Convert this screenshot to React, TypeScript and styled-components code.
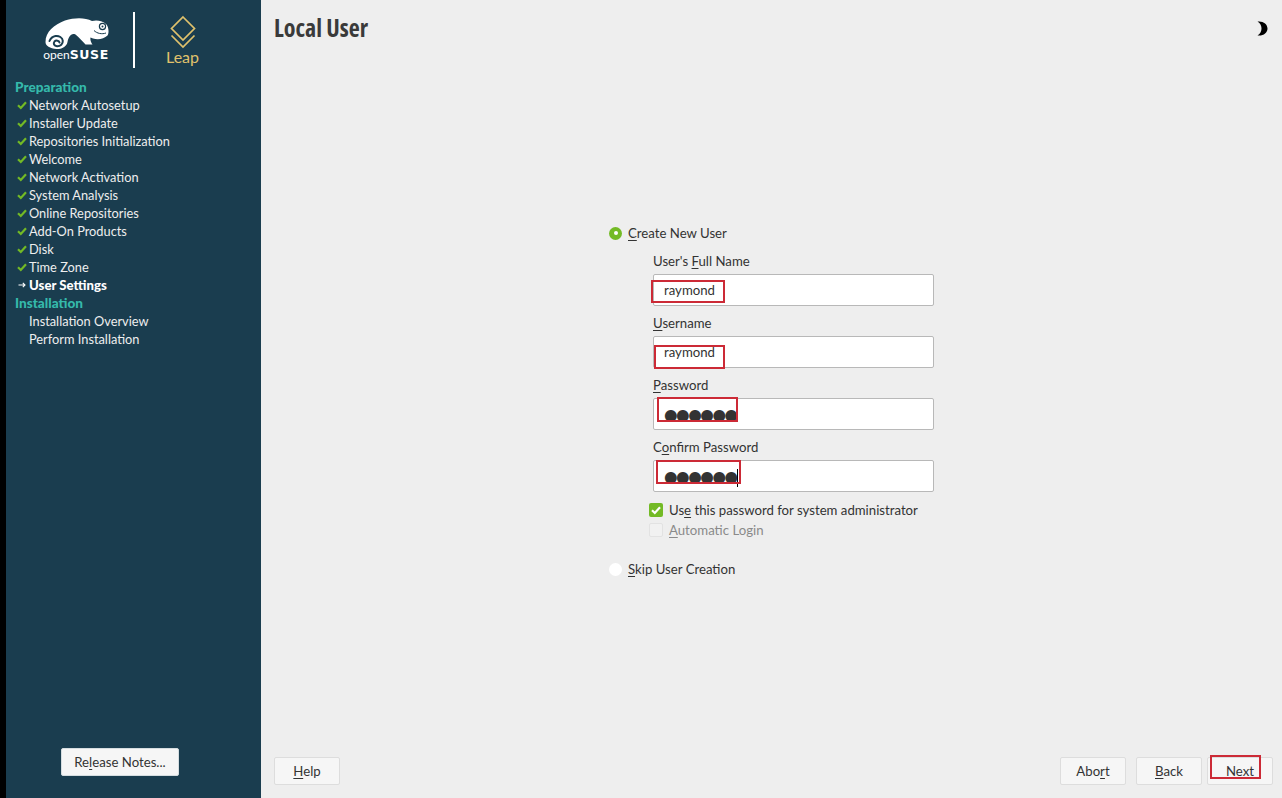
import React from "react";
import styled, { createGlobalStyle } from "styled-components";

const GlobalStyle = createGlobalStyle`
  html, body {
    margin: 0;
    height: 100%;
    overflow: hidden;
  }
  #root {
    height: 100%;
  }
`;

const Page = styled.div`
  display: flex;
  width: 1282px;
  height: 798px;
  background: #eeeeee;
  color: #333333;
  font-family: Lato, "Noto Sans", sans-serif;
  font-size: 13.2px;
`;

const Sidebar = styled.aside`
  display: flex;
  flex-direction: column;
  width: 255px;
  margin-left: 6px;
  background: #1a3d4f;
  box-shadow: -6px 0 0 #000;
  color: #eeeeee;
  font-size: 12.8px;
`;

const Logos = styled.div`
  display: flex;
  align-items: flex-start;
  height: 78px;
  box-sizing: border-box;
  padding: 12px 0 0 36px;
`;

const SuseLogo = styled.div`
  display: flex;
  flex-direction: column;
  align-items: center;
  width: 72px;
  padding-top: 5px;
`;

const SuseWord = styled.div`
  display: flex;
  align-items: baseline;
  padding-right: 4px;
  color: #ffffff;
  line-height: 12px;
`;

const SuseOpen = styled.span`
  font-size: 12px;
`;

const SuseBold = styled.span`
  font-family: "DejaVu Sans", sans-serif;
  font-size: 12.5px;
  font-weight: 700;
  letter-spacing: 0.6px;
`;

const Divider = styled.div`
  width: 1.5px;
  height: 56px;
  margin: 0 0 0 19px;
  background: #ffffff;
`;

const LeapLogo = styled.div`
  display: flex;
  flex-direction: column;
  align-items: center;
  width: 40px;
  margin-left: 28px;
  padding-top: 3px;
  color: #e0c26c;
  font-size: 16px;
`;

const LeapWord = styled.span`
  margin-top: -2px;
  line-height: 20px;
`;

const Steps = styled.nav`
  display: flex;
  flex-direction: column;
  flex: 1;
  padding-left: 9px;
`;

const StepHeading = styled.div`
  height: 18px;
  line-height: 18px;
  color: #35b9ab;
  font-size: 13.6px;
  font-weight: 900;
`;

const Step = styled.div<{ $current?: boolean }>`
  display: flex;
  align-items: center;
  height: 18px;
  line-height: 18px;
  font-size: ${(p) => (p.$current ? "13.2px" : "inherit")};
  font-weight: ${(p) => (p.$current ? 900 : 400)};
  color: ${(p) => (p.$current ? "#ffffff" : "#eeeeee")};
`;

const StepMark = styled.span`
  display: flex;
  align-items: center;
  justify-content: center;
  width: 14px;
`;

const SidebarFooter = styled.div`
  display: flex;
  padding: 0 0 22px 55px;
`;

const Button = styled.button`
  box-sizing: border-box;
  height: 28px;
  width: 66px;
  padding: 0;
  position: relative;
  background: #f6f6f6;
  border: 1px solid #dddddd;
  border-radius: 2px;
  color: #333333;
  font: inherit;
  font-size: 13.2px;
`;

const ReleaseButton = styled(Button)`
  width: 118px;
  border-color: #d5dde0;
`;

const Main = styled.main`
  display: flex;
  flex-direction: column;
  flex: 1;
  min-width: 0;
`;

const Header = styled.header`
  display: flex;
  align-items: flex-start;
  justify-content: space-between;
  height: 57px;
  box-sizing: border-box;
  padding: 11px 14px 0 13px;
`;

const Title = styled.h1`
  margin: 0;
  color: #3a3a3a;
  font-family: "Open Sans", sans-serif;
  font-size: 24px;
  font-stretch: condensed;
  font-weight: 700;
  line-height: 34px;
`;

const ThemeToggle = styled.span`
  display: flex;
  margin-top: 10px;
`;

const Content = styled.div`
  display: flex;
  flex: 1;
  align-items: center;
  justify-content: center;
  min-height: 0;
`;

const Form = styled.form`
  display: flex;
  flex-direction: column;
  width: 325px;
`;

const RadioRow = styled.label`
  display: flex;
  align-items: center;
  height: 18px;
`;

const Radio = styled.span<{ $on?: boolean }>`
  display: flex;
  align-items: center;
  justify-content: center;
  box-sizing: border-box;
  width: 13px;
  height: 13px;
  margin-right: 6px;
  border-radius: 50%;
  background: ${(p) => (p.$on ? "#73ba25" : "#ffffff")};
  &::after {
    content: "";
    display: ${(p) => (p.$on ? "block" : "none")};
    width: 4px;
    height: 4px;
    border-radius: 50%;
    background: #ffffff;
  }
`;

const UserFields = styled.div`
  display: flex;
  flex-direction: column;
  gap: 8px;
  margin: 10px 0 0 44px;
`;

const Field = styled.div`
  display: flex;
  flex-direction: column;
  gap: 4px;
  position: relative;
`;

const FieldLabel = styled.label`
  height: 18px;
  line-height: 18px;
`;

const TextBox = styled.div`
  display: flex;
  align-items: center;
  box-sizing: border-box;
  height: 32px;
  padding-left: 10px;
  background: #ffffff;
  border: 1px solid #b8b8b8;
  border-radius: 2px;
`;

const Dots = styled.span`
  margin-top: 2px;
  font-family: "DejaVu Sans", sans-serif;
  font-size: 15.6px;
  letter-spacing: -1.5px;
  line-height: 20px;
`;

const Caret = styled.span`
  width: 1px;
  height: 18px;
  margin: 3px 0 0 0;
  background: #000000;
`;

const Highlight = styled.span<{ $x: number; $y: number; $w: number; $h: number }>`
  position: absolute;
  left: ${(p) => p.$x}px;
  top: ${(p) => p.$y}px;
  width: ${(p) => p.$w}px;
  height: ${(p) => p.$h}px;
  box-sizing: border-box;
  border: 2px solid #cc2a36;
  pointer-events: none;
`;

const Options = styled.div`
  display: flex;
  flex-direction: column;
  gap: 2px;
  margin: 9px 0 21px 40px;
`;

const CheckRow = styled.label<{ $disabled?: boolean }>`
  display: flex;
  align-items: center;
  height: 18px;
  color: ${(p) => (p.$disabled ? "#8a8a8a" : "#333333")};
`;

const CheckBox = styled.span<{ $on?: boolean; $disabled?: boolean }>`
  display: flex;
  align-items: center;
  justify-content: center;
  box-sizing: border-box;
  width: 14px;
  height: 14px;
  margin-right: 6px;
  border-radius: 2px;
  background: ${(p) => (p.$on ? "#73ba25" : "#f1f1f1")};
  border: ${(p) => (p.$disabled ? "1px solid #e2e2e2" : "none")};
`;

const Mnemonic = styled.span`
  text-decoration: underline;
  text-underline-offset: 2px;
`;

const Footer = styled.footer`
  display: flex;
  align-items: flex-end;
  height: 53px;
  box-sizing: border-box;
  padding: 0 9px 13px 13px;
`;

const FooterSpacer = styled.div`
  flex: 1;
`;

const BackButton = styled(Button)`
  margin-left: 10px;
`;

const NextButton = styled(Button)`
  margin-left: 5px;
`;

const suseBody =
  "M45.5 43C45.5 33 54 25.5 65 21.5C75 18.5 85 18.5 92 22C97 20.5 103 22 106.5 25.5C109 29 109 34 107.5 36.5C104 40 98 41 93 39.5L90.5 38.5C90 41 91 43.5 92.5 45.5H85.5C82 42 79 38 75.5 35.5C71 33.5 68.5 38 67.5 43C66.5 47.5 62 50.5 56.5 50C50 49.5 45.5 47 45.5 43Z";

const OpensuseMark = () => (
  <svg width="72" height="32" viewBox="42 18 72 32" aria-hidden="true">
    <path d={suseBody} fill="#ffffff" />
    <path
      d="M59.5 43.5C59 41.5 56 41 54.5 42.5C53 44.5 54 47 57 47.2C60.5 47.3 63 45 62.8 41.8C62.5 38.5 59 36.5 55.5 37C52.5 37.5 50.5 39.5 49.5 42"
      fill="none"
      stroke="#1a3d4f"
      strokeWidth="2"
      strokeLinecap="round"
    />
    <circle cx="102.5" cy="27.5" r="3.1" fill="none" stroke="#1a3d4f" strokeWidth="1.2" />
    <circle cx="102.5" cy="27.5" r="1" fill="#1a3d4f" />
    <path d="M94 31.5C97 34.5 102 35.5 106 34" fill="none" stroke="#1a3d4f" strokeWidth="1" />
  </svg>
);

const LeapMark = () => (
  <svg width="26" height="34" viewBox="0 0 26 34" aria-hidden="true">
    <path d="M13 2L24.5 13.5L13 25L1.5 13.5Z" fill="none" stroke="#e0c26c" strokeWidth="1.7" />
    <path d="M1.5 20.5L13 32L24.5 20.5" fill="none" stroke="#e0c26c" strokeWidth="1.7" />
  </svg>
);

const CheckMark = ({ color = "#73ba25", size = 10 }: { color?: string; size?: number }) => (
  <svg width={size} height={size} viewBox="0 0 10 10" aria-hidden="true">
    <path d="M1 5.3L3.8 8L9 2.2" fill="none" stroke={color} strokeWidth="2.2" />
  </svg>
);

const ArrowMark = () => (
  <svg width="8" height="8" viewBox="0 0 8 8" aria-hidden="true">
    <path d="M0.5 4H7M4.8 1.8L7 4L4.8 6.2" fill="none" stroke="#ffffff" strokeWidth="1.1" />
  </svg>
);

const MoonIcon = () => (
  <svg width="11" height="15" viewBox="0 0 11 15" aria-hidden="true">
    <path d="M0.5 0.5C6 -0.3 10.5 3 10.5 7.5C10.5 12 6 15.3 0.5 14.5C3.5 12.5 4.5 10 4.5 7.5C4.5 5 3.5 2.5 0.5 0.5Z" fill="#000000" />
  </svg>
);

const prepSteps = [
  "Network Autosetup",
  "Installer Update",
  "Repositories Initialization",
  "Welcome",
  "Network Activation",
  "System Analysis",
  "Online Repositories",
  "Add-On Products",
  "Disk",
  "Time Zone",
];

export default function App() {
  return (
    <Page>
      <GlobalStyle />
      <Sidebar>
        <Logos>
          <SuseLogo>
            <OpensuseMark />
            <SuseWord>
              <SuseOpen>open</SuseOpen>
              <SuseBold>SUSE</SuseBold>
            </SuseWord>
          </SuseLogo>
          <Divider />
          <LeapLogo>
            <LeapMark />
            <LeapWord>Leap</LeapWord>
          </LeapLogo>
        </Logos>
        <Steps>
          <StepHeading>Preparation</StepHeading>
          {prepSteps.map((name) => (
            <Step key={name}>
              <StepMark>
                <CheckMark />
              </StepMark>
              {name}
            </Step>
          ))}
          <Step $current>
            <StepMark>
              <ArrowMark />
            </StepMark>
            User Settings
          </Step>
          <StepHeading>Installation</StepHeading>
          <Step>
            <StepMark />
            Installation Overview
          </Step>
          <Step>
            <StepMark />
            Perform Installation
          </Step>
        </Steps>
        <SidebarFooter>
          <ReleaseButton type="button">
            Re<Mnemonic>l</Mnemonic>ease Notes...
          </ReleaseButton>
        </SidebarFooter>
      </Sidebar>
      <Main>
        <Header>
          <Title>Local User</Title>
          <ThemeToggle>
            <MoonIcon />
          </ThemeToggle>
        </Header>
        <Content>
          <Form>
            <RadioRow>
              <Radio $on />
              <span>
                <Mnemonic>C</Mnemonic>reate New User
              </span>
            </RadioRow>
            <UserFields>
              <Field>
                <FieldLabel>
                  User's <Mnemonic>F</Mnemonic>ull Name
                </FieldLabel>
                <TextBox>raymond</TextBox>
                <Highlight $x={-2} $y={28} $w={74} $h={23} />
              </Field>
              <Field>
                <FieldLabel>
                  <Mnemonic>U</Mnemonic>sername
                </FieldLabel>
                <TextBox>raymond</TextBox>
                <Highlight $x={1} $y={31} $w={71} $h={24} />
              </Field>
              <Field>
                <FieldLabel>
                  <Mnemonic>P</Mnemonic>assword
                </FieldLabel>
                <TextBox>
                  <Dots>●●●●●●</Dots>
                </TextBox>
                <Highlight $x={4} $y={21} $w={81} $h={25} />
              </Field>
              <Field>
                <FieldLabel>
                  C<Mnemonic>o</Mnemonic>nfirm Password
                </FieldLabel>
                <TextBox>
                  <Dots>●●●●●●</Dots>
                  <Caret />
                </TextBox>
                <Highlight $x={3} $y={22} $w={85} $h={24} />
              </Field>
            </UserFields>
            <Options>
              <CheckRow>
                <CheckBox $on>
                  <CheckMark color="#ffffff" size={10} />
                </CheckBox>
                <span>
                  Us<Mnemonic>e</Mnemonic> this password for system administrator
                </span>
              </CheckRow>
              <CheckRow $disabled>
                <CheckBox $disabled />
                <span>
                  <Mnemonic>A</Mnemonic>utomatic Login
                </span>
              </CheckRow>
            </Options>
            <RadioRow>
              <Radio />
              <span>
                <Mnemonic>S</Mnemonic>kip User Creation
              </span>
            </RadioRow>
          </Form>
        </Content>
        <Footer>
          <Button type="button">
            <Mnemonic>H</Mnemonic>elp
          </Button>
          <FooterSpacer />
          <Button type="button">
            Abo<Mnemonic>r</Mnemonic>t
          </Button>
          <BackButton type="button">
            <Mnemonic>B</Mnemonic>ack
          </BackButton>
          <NextButton type="button">
            Next
            <Highlight $x={2} $y={-3} $w={51} $h={24} />
          </NextButton>
        </Footer>
      </Main>
    </Page>
  );
}
